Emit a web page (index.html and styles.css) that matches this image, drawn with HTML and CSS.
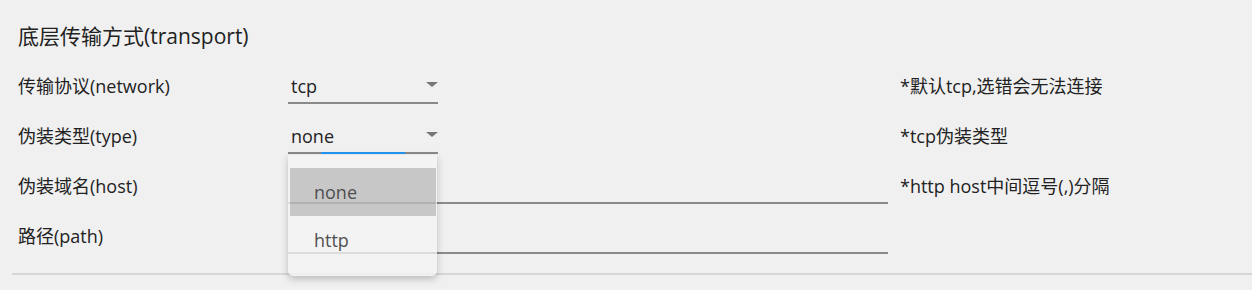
FILE: index.html
```html
<!DOCTYPE html>
<html lang="zh-CN">
<head>
<meta charset="utf-8">
<link rel="stylesheet" href="styles.css">
</head>
<body>
<section class="section">
  <h2 class="title">底层传输方式(transport)</h2>
  <div class="form">
    <div class="label">传输协议(network)</div>
    <div class="field">
      <div class="select">
        <span class="value">tcp</span>
        <span class="arrow"></span>
      </div>
    </div>
    <div class="help">*默认tcp,选错会无法连接</div>

    <div class="label">伪装类型(type)</div>
    <div class="field">
      <div class="select focused">
        <span class="value">none</span>
        <span class="arrow"></span>
        <span class="focus-bar"></span>
        <ul class="menu">
          <li class="item selected">none</li>
          <li class="item">http</li>
        </ul>
      </div>
    </div>
    <div class="help">*tcp伪装类型</div>

    <div class="label">伪装域名(host)</div>
    <div class="field">
      <div class="input"></div>
    </div>
    <div class="help">*http host中间逗号(,)分隔</div>

    <div class="label">路径(path)</div>
    <div class="field">
      <div class="input"></div>
    </div>
    <div class="help"></div>
  </div>
</section>
</body>
</html>
```

FILE: styles.css
```css
html, body {
  margin: 0;
  padding: 0;
  background: #f0f0f0;
}

body {
  width: 1252px;
  height: 290px;
  overflow: hidden;
  font-family: "Open Sans", "Noto Sans CJK SC", sans-serif;
  color: #222;
}

.section {
  margin-left: 12px;
  padding: 0 0 13px 6px;
  border-bottom: 2px solid #d6d6d6;
}

.title {
  margin: 0;
  padding-top: 22px;
  height: 38px;
  line-height: 28px;
  font-size: 21px;
  font-weight: normal;
  color: #222;
}

.form {
  display: grid;
  grid-template-columns: 270px 612px 1fr;
  grid-auto-rows: 50px;
}

.label,
.help {
  display: flex;
  align-items: center;
  font-size: 18px;
  line-height: 24px;
  padding-top: 1px;
}

.field {
  padding-top: 10px;
}

.select {
  position: relative;
  width: 150px;
  height: 32px;
  border-bottom: 2px solid #8a8a8a;
  display: flex;
  align-items: center;
}

.value {
  padding-left: 3px;
  font-size: 18px;
  line-height: 24px;
  color: #222;
}

.arrow {
  position: absolute;
  right: 0;
  top: 12px;
  width: 0;
  height: 0;
  border-left: 6px solid transparent;
  border-right: 6px solid transparent;
  border-top: 5px solid #777;
}

.focus-bar {
  position: absolute;
  left: 33px;
  width: 84px;
  bottom: -2px;
  height: 2px;
  background: #2196f3;
}

.input {
  width: 600px;
  height: 32px;
  border-bottom: 2px solid #8a8a8a;
}

.menu {
  position: absolute;
  z-index: 2;
  top: 35px;
  left: 0;
  width: 149px;
  height: 121px;
  box-sizing: border-box;
  margin: 0;
  padding: 13px 1px 0 2px;
  list-style: none;
  background: #f4f4f4;
  border-radius: 0 0 5px 5px;
  box-shadow: 0 3px 7px rgba(0, 0, 0, 0.28);
  opacity: 0.78;
}

.item {
  height: 48px;
  line-height: 48px;
  padding-left: 24px;
  font-size: 18px;
  color: #222;
}

.item.selected {
  background: #bcbcbc;
}
```
